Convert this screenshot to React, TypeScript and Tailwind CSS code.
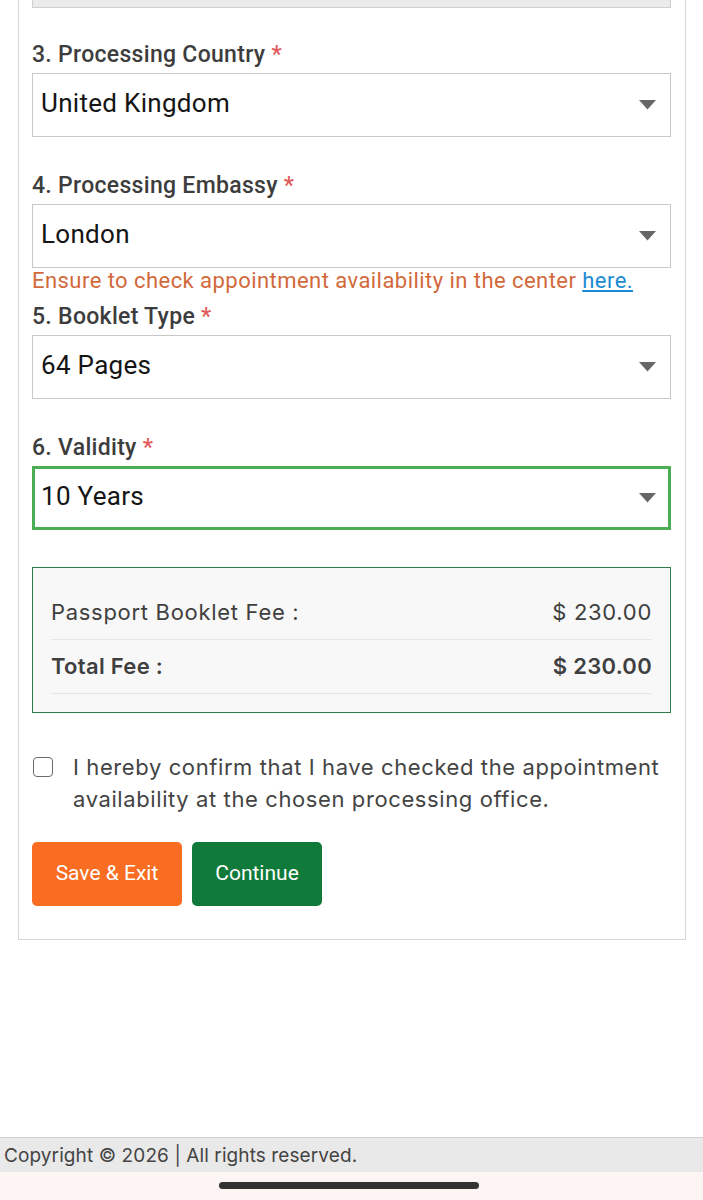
type SelectProps = {
  label: string
  value: string
  focused?: boolean
}

function Caret() {
  return (
    <svg width="17" height="10" viewBox="0 0 17 10" className="shrink-0">
      <path d="M0 0 L17 0 L8.5 9.5 Z" fill="#666666" />
    </svg>
  )
}

function SelectField({ label, value, focused }: SelectProps) {
  return (
    <div>
      <div className="h-[30px] pt-[2px] font-['Roboto',sans-serif] text-[23px] font-medium leading-[28px] tracking-[0.3px] text-[#3d3d3d]">
        {label} <span className="text-[#e05a5a]">*</span>
      </div>
      <div
        className={`mt-[4px] flex h-[64px] items-center justify-between bg-white pb-[4px] ${
          focused ? 'border-[3px] border-[#4cae54] pl-[6px] pr-[12px]' : 'border border-[#c8c8c8] pl-[8px] pr-[14px]'
        }`}
      >
        <span className="font-['Roboto',sans-serif] text-[26px] tracking-[0.3px] text-[#151515]">{value}</span>
        <span className="pt-[4px]">
          <Caret />
        </span>
      </div>
    </div>
  )
}

function FeeRow({ label, amount, bold }: { label: string; amount: string; bold?: boolean }) {
  return (
    <div
      className={`flex h-[54px] items-center justify-between border-b border-[#e6e6e6] font-['Inter',sans-serif] text-[22px] text-[#3f3f3f] ${
        bold ? 'font-semibold tracking-[0.3px]' : 'font-normal tracking-[0.7px]'
      }`}
    >
      <span>{label}</span>
      <span>{amount}</span>
    </div>
  )
}

export default function App() {
  return (
    <div className="flex h-[1200px] w-[703px] flex-col bg-white">
      <div className="ml-[18px] w-[668px] border-x border-b border-[#d6d6d6] pb-[33px] pl-[13px] pr-[14px]">
        <div className="h-[8px] border-x border-b border-[#cfcfcf] bg-[#ebebeb]" />

        <div className="mt-[31px]">
          <SelectField label="3. Processing Country" value="United Kingdom" />
        </div>
        <div className="mt-[33px]">
          <SelectField label="4. Processing Embassy" value="London" />
        </div>
        <div className="h-[30px] font-['Roboto',sans-serif] text-[22px] leading-[26px] tracking-[0.45px] text-[#d2693b]">
          Ensure to check appointment availability in the center{' '}
          <span className="text-[#1d8bd3] underline underline-offset-2">here.</span>
        </div>
        <div className="mt-[3px]">
          <SelectField label="5. Booklet Type" value="64 Pages" />
        </div>
        <div className="mt-[33px]">
          <SelectField label="6. Validity" value="10 Years" focused />
        </div>

        <div className="mt-[37px] border-[1.5px] border-[#2f7a50] bg-[#f8f8f8] px-[18px] pb-[18px] pt-[18px]">
          <FeeRow label="Passport Booklet Fee :" amount="$ 230.00" />
          <FeeRow label="Total Fee :" amount="$ 230.00" bold />
        </div>

        <div className="mt-[38px] flex items-start gap-[20px] pl-[1px]">
          <div className="mt-[6px] h-[20px] w-[20px] shrink-0 rounded-[4px] border-[1.5px] border-[#6b6b6b] bg-white" />
          <p className="font-['Inter',sans-serif] text-[22px] leading-[32px] tracking-[0.6px] text-[#444444]">
            I hereby confirm that I have checked the appointment availability at the chosen processing office.
          </p>
        </div>

        <div className="mt-[27px] flex gap-[10px]">
          <button
            type="button"
            className="h-[64px] w-[150px] rounded-[5px] bg-[#f86d22] font-['Roboto',sans-serif] text-[21px] text-white"
          >
            Save &amp; Exit
          </button>
          <button
            type="button"
            className="h-[64px] w-[130px] rounded-[5px] bg-[#0f7a39] font-['Roboto',sans-serif] text-[21px] text-white"
          >
            Continue
          </button>
        </div>
      </div>

      <div className="mt-auto">
        <div className="flex h-[35px] items-center border-t border-[#cfcfcf] bg-[#e9e9e9] pl-[4px] pt-[3px] font-['Inter',sans-serif] text-[19px] tracking-[0.1px] text-[#444444]">
          Copyright © 2026 | All rights reserved.
        </div>
        <div className="h-[28px] bg-[#fdf5f3] pl-[219px] pt-[10px]">
          <div className="h-[7px] w-[260px] rounded-full bg-[#333333]" />
        </div>
      </div>
    </div>
  )
}
